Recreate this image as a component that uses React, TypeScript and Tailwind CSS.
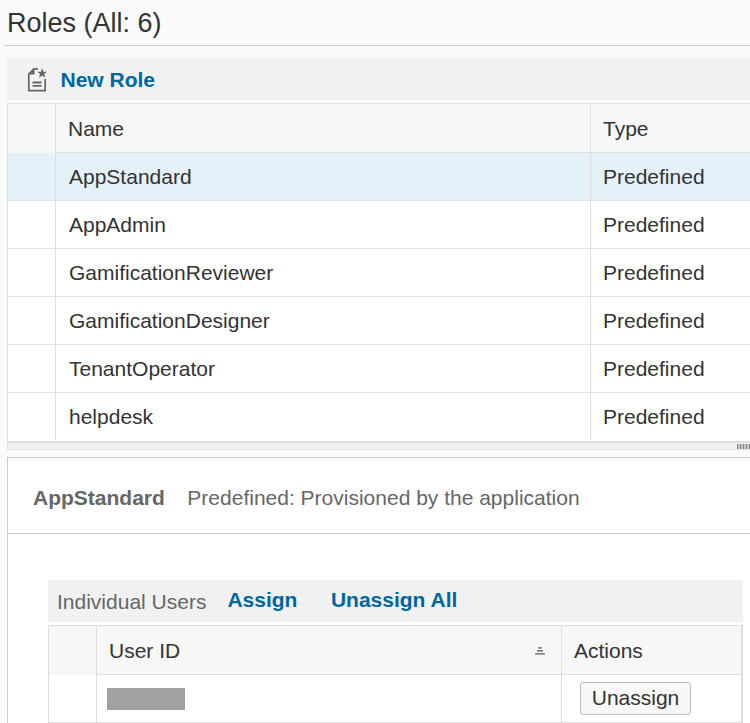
const roles = ['AppStandard', 'AppAdmin', 'GamificationReviewer', 'GamificationDesigner', 'TenantOperator', 'helpdesk'];

function NewRoleIcon() {
  return (
    <svg width="20" height="26" viewBox="0 0 20 26" className="mt-[2px] shrink-0" fill="none" stroke="#666" strokeWidth="1.7">
      <path d="M11 1.800H7L1.800 7V23.700H18.200V12" />
      <path d="M1 7.500L7.500 1V7.500Z" fill="#666" stroke="none" />
      <path d="M5.500 15.500H14.500M5.500 18.900H14.500" strokeWidth="1.8" />
      <path d="M15.200 1.200l1.300 3.500h3.500l-2.800 2.300 1.100 3.800-3.100-2.200-3.200 2.200 1.100-3.800L10.200 4.700h3.700z" fill="#666" stroke="none" />
    </svg>
  );
}

function SortIcon() {
  return (
    <svg width="10" height="8" viewBox="0 0 10 8" fill="#808080">
      <path d="M3.300 0h3.400v1.700H3.300zM2 3h6v1.700H2zM.2 6h9.600v1.800H.2z" />
    </svg>
  );
}

export default function App() {
  return (
    <main className="h-[723px] w-[750px] overflow-hidden bg-[#fafafa] font-['Liberation_Sans',Arial,sans-serif] text-[21px] leading-[24px] text-[#333]">
      <h1 className="ml-1 h-[46px] border-b border-[#ccc] pl-[3px] pt-[7px] text-[27px] leading-[32px]">Roles (All: 6)</h1>
      <div className="ml-[7px] mt-3 flex h-[42px] items-center bg-[#f1f1f1] pl-5">
        <NewRoleIcon />
        <button className="ml-[13.5px] pt-[2px] text-[21px] font-bold text-[#00679e]">New Role</button>
      </div>
      <section className="ml-[7px] mt-[3px] border-l border-t border-[#ddd] bg-white">
        <div className="flex h-[49px] bg-[#f7f7f7]">
          <div className="w-[48px] border-r border-[#ddd]" />
          <div className="flex w-[535px] items-center border-b border-r border-[#ddd] pl-[12px] pt-px">Name</div>
          <div className="flex flex-1 items-center border-b border-[#ddd] pl-[12px] pt-px">Type</div>
        </div>
        {roles.map((role, i) => (
          <div key={role} className={`flex h-12 ${i === roles.length - 1 ? '' : 'border-b border-[#e2e2e2]'} ${i === 0 ? 'bg-[#e5f1f9]' : 'bg-white'}`}>
            <div className="w-[48px] border-r border-[#ddd]" />
            <div className="flex h-[47px] w-[535px] items-center pl-[13px] pt-px">{role}</div>
            <div className="-ml-px h-full w-px bg-[#ddd]" />
            <div className="flex h-[47px] items-center pl-[12px] pt-px">Predefined</div>
          </div>
        ))}
      </section>
      <div className="ml-[7px] flex h-[9px] items-center justify-end border-b border-l border-t-2 border-[#e0e0e0] bg-[#f1f1f1]">
        <div className="flex h-[5px] w-[13px] gap-px overflow-hidden bg-[#c4c4c4]">
          {[0, 1, 2, 3, 4].map((n) => <i key={n} className="mr-px w-px shrink-0 bg-[#858585]" />)}
        </div>
      </div>
      <section className="ml-[7px] mt-[7px] h-[266px] border-l border-t border-[#ccc] bg-white">
        <header className="flex h-[76px] items-center border-b border-[#ccc] pl-[25px] pt-[4px] text-[#666]">
          <b>AppStandard</b>
          <span className="ml-[22.500px]">Predefined: Provisioned by the application</span>
        </header>
        <div className="ml-10 mt-[46px] w-[695px]">
          <div className="flex h-[42px] items-center bg-[#f1f1f1] pb-px pl-[9px]">
            <span className="pt-[2px] text-[#666]">Individual Users</span>
            <button className="ml-[21px] pb-px font-bold text-[#00679e]">Assign</button>
            <button className="ml-[33.500px] pb-px font-bold text-[#00679e]">Unassign All</button>
          </div>
          <div className="mt-[3px] border-l border-r-2 border-t border-[#ddd]">
            <div className="flex h-[49px] bg-[#f7f7f7]">
              <div className="w-[48px] border-r border-[#ddd]" />
              <div className="flex w-[465px] items-center justify-between border-b border-r border-[#ddd] pl-[12px] pr-4 pt-px">
                User ID<SortIcon />
              </div>
              <div className="flex flex-1 items-center border-b border-[#ddd] pl-[12px] pt-px">Actions</div>
            </div>
            <div className="flex h-12 border-b border-[#ddd] bg-white">
              <div className="w-[48px] border-r border-[#ddd]" />
              <div className="flex w-[465px] items-center border-r border-[#ddd] pl-[10px]">
                <div className="h-[22px] w-[78px] bg-[#a2a2a2]" />
              </div>
              <div className="flex items-center pl-[18px]">
                <button className="h-[33px] w-[111px] rounded-[3px] border border-[#bbb] bg-[#f7f7f7] pb-[2px]">Unassign</button>
              </div>
            </div>
          </div>
        </div>
      </section>
    </main>
  );
}
